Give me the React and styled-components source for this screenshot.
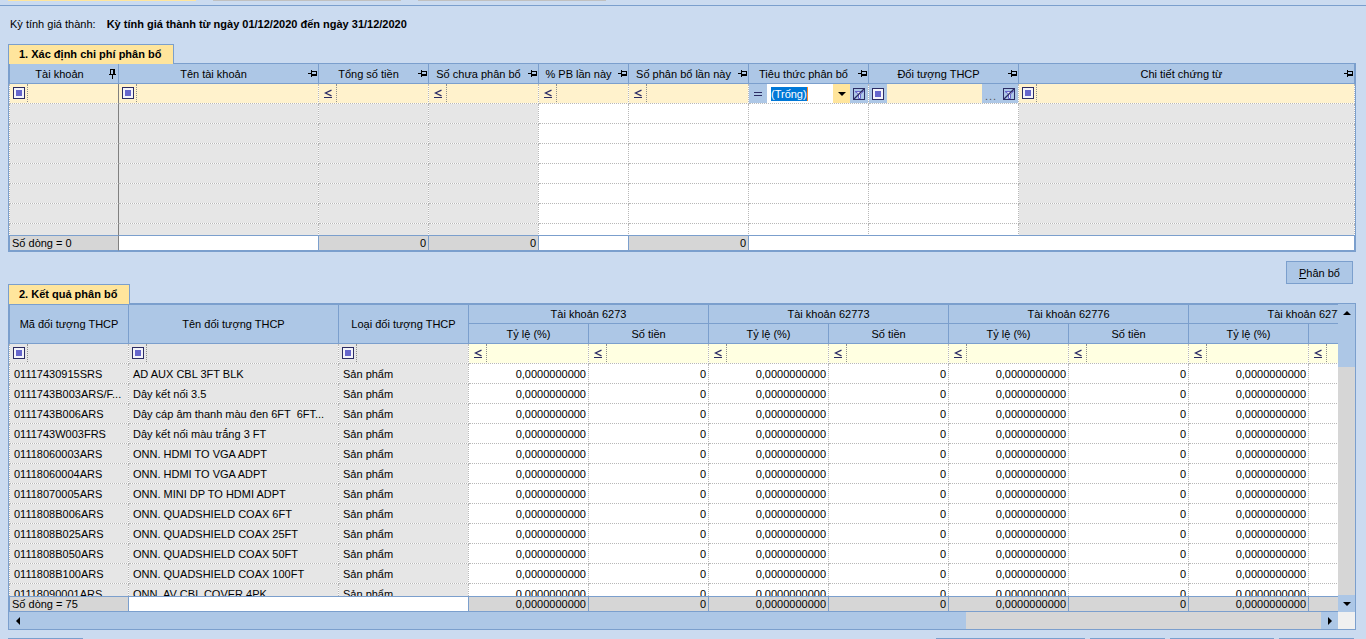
import styled, { createGlobalStyle, ThemeProvider, css } from "styled-components";

const theme = {
  colors: {
    page: "#cbdbf0",
    header: "#adc7e6",
    line: "#7b9fcd",
    tab: "#ffe59c",
    filter: "#fff2cc",
    filterAlt: "#ffffe1",
    locked: "#e6e6e6",
    summary: "#d6d6d6",
    dots: "#b8b8b8",
    icon: "#2c2c64",
    iconFill: "#6666cc",
    select: "#0078d7",
  },
  font: '"Liberation Sans", Arial, sans-serif',
};

const GlobalStyle = createGlobalStyle`
  *, *::before, *::after {
    box-sizing: border-box;
  }

  body {
    margin: 0;
    background: ${(p) => p.theme.colors.page};
    color: #000;
    font-family: ${(p) => p.theme.font};
    font-size: 11px;
    line-height: 14px;
  }

  button, input, select {
    font: inherit;
    color: inherit;
    border: 0;
    border-radius: 0;
    margin: 0;
    padding: 0;
    background: transparent;
  }
`;

const Window = styled.div`
  height: 100vh;
  display: flex;
  flex-direction: column;
  overflow: hidden;
`;

const StepStrip = styled.div`
  display: flex;
  gap: 17px;
  height: 6px;
  padding-left: 8px;
  border-bottom: 1px solid ${(p) => p.theme.colors.line};
`;

const Step = styled.span`
  width: 188px;
  height: 1px;
  background: ${(p) => (p.$active ? p.theme.colors.tab : "#c0c0c0")};
`;

const Content = styled.main`
  flex: 1;
  min-height: 0;
  display: flex;
  flex-direction: column;
  padding: 0 10px 8px 8px;
`;

const Period = styled.p`
  display: flex;
  gap: 11px;
  margin: 0;
  padding: 11px 2px 13px;
`;

const TabTitle = styled.h2`
  align-self: flex-start;
  position: relative;
  z-index: 1;
  height: 20px;
  margin: 0 0 -1px;
  padding: 2px 12px 0 10px;
  font-size: 11px;
  background: ${(p) => p.theme.colors.tab};
  border: 1px solid ${(p) => p.theme.colors.line};
  border-bottom: 0;
`;

const CostGrid = styled.div`
  height: 189px;
  flex: none;
  overflow: hidden;
  border: 1px solid ${(p) => p.theme.colors.line};
`;

const ResultGrid = styled.div`
  flex: 1;
  min-height: 0;
  display: grid;
  grid-template-columns: minmax(0, 1fr) 17px;
  grid-template-rows: minmax(0, 1fr) 17px;
  border: 1px solid ${(p) => p.theme.colors.line};
`;

const ResultView = styled.div`
  overflow: hidden;
`;

const Table = styled.table`
  width: ${(p) => p.$width || "100%"};
  table-layout: fixed;
  border-collapse: separate;
  border-spacing: 0;
  background: #fff;

  thead th:first-child,
  tfoot td:first-child {
    border-left: 1px solid ${(p) => p.theme.colors.line};
  }

  thead tr + tr th:first-child {
    border-left: 0;
  }

  tbody td:first-child {
    border-left: 1px dotted ${(p) => p.theme.colors.dots};
  }
`;

const Head = styled.th`
  height: 20px;
  padding: 0;
  font-weight: normal;
  text-align: center;
  white-space: nowrap;
  overflow: hidden;
  background: ${(p) => p.theme.colors.header};
  border-right: 1px solid ${(p) => p.theme.colors.line};
  border-bottom: 1px solid ${(p) => p.theme.colors.line};
  ${(p) => p.$topLine && css`border-top: 1px solid ${p.theme.colors.line};`}
`;

const HeadInner = styled.div`
  display: flex;
  align-items: center;

  span {
    flex: 1;
  }

  svg {
    flex: none;
  }
`;

const Cell = styled.td`
  height: 20px;
  padding: 0 2px 0 4px;
  white-space: pre;
  overflow: hidden;
  text-align: ${(p) => (p.$number ? "right" : "left")};
  background: ${(p) => (p.$locked ? p.theme.colors.locked : "#fff")};
  background-clip: padding-box;
  border-right: 1px dotted ${(p) => p.theme.colors.dots};
  border-bottom: 1px dotted ${(p) => p.theme.colors.dots};
  ${(p) => p.$frozenEdge && css`border-right: 1px solid #808080;`}
`;

const FilterTd = styled(Cell)`
  padding: 0;
  background: ${(p) => p.theme.colors[p.$tone]};
  background-clip: padding-box;
`;

const FilterBox = styled.div`
  display: flex;
  height: 19px;

  input {
    flex: 1;
    min-width: 0;
    width: 0;
    outline: 0;
  }
`;

const FilterButton = styled.button`
  flex: none;
  width: 18px;
  height: ${(p) => (p.$solid ? 19 : 18)}px;
  display: flex;
  align-items: center;
  justify-content: center;
  background: ${(p) => (p.$solid ? p.theme.colors.header : "transparent")};
  ${(p) => !p.$solid && css`border-right: 1px dotted #909090;`}
`;

const MoreButton = styled(FilterButton)`
  align-items: flex-end;
  color: #555;
  letter-spacing: 1px;
`;

const DropButton = styled(FilterButton)`
  width: 17px;
  background: ${(p) => p.theme.colors.tab};
`;

const ComboField = styled.div`
  flex: 1;
  display: flex;
  align-items: center;
  padding-left: 4px;
  background: #fff;
`;

const Combo = styled.select`
  appearance: none;
  height: 14px;
  color: #fff;
  background: ${(p) => p.theme.colors.select};
  border-right: 1px solid #ff8728;
  outline: 0;
`;

const SumCell = styled.td`
  position: sticky;
  bottom: 0;
  height: 16px;
  padding: 0 2px;
  line-height: 14px;
  white-space: nowrap;
  text-align: ${(p) => (p.$number ? "right" : "left")};
  background: ${(p) => (p.$blank ? "#fff" : p.theme.colors.summary)};
  border: 0 solid ${(p) => p.theme.colors.line};
  border-width: 1px 1px 1px 0;
  ${(p) => p.$frozenEdge && css`border-right-color: #808080;`}
`;

const Actions = styled.div`
  display: flex;
  justify-content: flex-end;
  padding: 9px 3px 0;
`;

const ActionButton = styled.button`
  height: 23px;
  padding: 0 12px;
  background: ${(p) => p.theme.colors.header};
  border: 1px solid ${(p) => p.theme.colors.line};
`;

const ScrollColumn = styled.div`
  display: flex;
  flex-direction: column;
  background: ${(p) => p.theme.colors.summary};
`;

const ScrollRow = styled.div`
  display: flex;
  background: ${(p) => p.theme.colors.summary};
`;

const ScrollButton = styled.button`
  flex: none;
  width: 17px;
  height: 17px;
  display: flex;
  align-items: center;
  justify-content: center;
  background: ${(p) => p.theme.colors.header};
`;

const Thumb = styled.div`
  flex: ${(p) => p.$share};
  background: ${(p) => p.theme.colors.header};
`;

const Rest = styled.div`
  flex: ${(p) => p.$share};
`;

const Corner = styled.div`
  background: #f0f0f0;
`;

const CommandBar = styled.footer`
  flex: none;
  display: flex;
  gap: 5px;
  height: 1px;
  padding: 0 12px 0 8px;
  overflow: hidden;
`;

const Command = styled.div`
  width: ${(p) => p.$width}px;
  height: 23px;
  background: ${(p) => p.theme.colors.header};
  border: 1px solid ${(p) => p.theme.colors.line};

  &:first-child {
    margin-right: auto;
  }
`;

function PinIcon({ down }) {
  if (down) {
    return (
      <svg width="9" height="10" viewBox="0 0 9 10" shapeRendering="crispEdges" aria-hidden="true">
        <path d="M1 0h5v1H1zM1 1h1v5H1zM4 1h2v5H4zM0 5h7v1H0zM3 6h1v4H3z" fill="#000" />
      </svg>
    );
  }
  return (
    <svg width="10" height="9" viewBox="0 0 10 9" shapeRendering="crispEdges" aria-hidden="true">
      <path d="M0 4h3v1H0zM3 1h1v7H3zM4 2h5v1H4zM8 3h1v2H8zM4 5h5v2H4z" fill="#000" />
    </svg>
  );
}

function ContainsIcon() {
  return (
    <svg width="12" height="12" viewBox="0 0 12 12" shapeRendering="crispEdges" aria-hidden="true">
      <rect x="0" y="0" width="12" height="12" fill="#2c2c64" />
      <rect x="1" y="1" width="10" height="10" fill="#f4f4fa" />
      <rect x="3" y="3" width="6" height="6" fill="#6666cc" />
    </svg>
  );
}

function LessEqualIcon() {
  return (
    <svg width="8" height="14" viewBox="0 0 8 14" aria-hidden="true">
      <path d="M7.5 4.2 1.4 7 7.5 9.8" fill="none" stroke="#2c2c64" strokeWidth="1.3" />
      <path d="M0 11h8v1H0z" fill="#2c2c64" shapeRendering="crispEdges" />
    </svg>
  );
}

function EqualIcon() {
  return (
    <svg width="8" height="5" viewBox="0 0 8 5" shapeRendering="crispEdges" aria-hidden="true">
      <path d="M0 1h8v1H0zM0 4h8v1H0z" fill="#2c2c64" />
    </svg>
  );
}

function ClearFilterIcon() {
  return (
    <svg width="12" height="12" viewBox="0 0 12 12" aria-hidden="true">
      <rect x=".5" y=".5" width="11" height="11" fill="#adc7e6" stroke="#2c2c64" />
      <path d="M2 3.5h8.5L7.5 6v4.5h-2V6z" fill="#e8eafc" stroke="#6666cc" strokeWidth="1" />
      <path d="M1 11 11 1" stroke="#2c2c64" strokeWidth="1.3" />
    </svg>
  );
}

function Arrow({ points }) {
  return (
    <svg width="8" height="8" viewBox="0 0 8 8" aria-hidden="true">
      <polygon points={points} fill="#000" />
    </svg>
  );
}

const ARROWS = {
  up: "0,6 4,2 8,6",
  down: "0,2 8,2 4,6",
  left: "6,0 6,8 2,4",
  right: "2,0 2,8 6,4",
};

const COST_COLUMNS = [
  { label: "Tài khoản", width: 110, op: "contains", locked: true, frozenEdge: true, sum: "Số dòng = 0" },
  { label: "Tên tài khoản", width: 200, op: "contains", locked: true },
  { label: "Tổng số tiền", width: 110, op: "lte", locked: true, sum: "0", number: true },
  { label: "Số chưa phân bổ", width: 110, op: "lte", locked: true, sum: "0", number: true },
  { label: "% PB lần này", width: 90, op: "lte" },
  { label: "Số phân bổ lần này", width: 120, op: "lte", sum: "0", number: true },
  { label: "Tiêu thức phân bổ", width: 120, op: "combo" },
  { label: "Đối tượng THCP", width: 150, op: "lookup" },
  { label: "Chi tiết chứng từ", op: "contains", locked: true },
];

const RESULT_COLUMNS = [
  { label: "Mã đối tượng THCP", width: 120 },
  { label: "Tên đối tượng THCP", width: 210 },
  { label: "Loại đối tượng THCP", width: 130 },
];

const ACCOUNTS = ["6273", "62773", "62776", "62777"];

const RESULT_ROWS = [
  ["01117430915SRS", "AD AUX CBL 3FT BLK"],
  ["0111743B003ARS/F...", "Dây kết nối 3.5"],
  ["0111743B006ARS", "Dây cáp âm thanh màu đen 6FT  6FT..."],
  ["0111743W003FRS", "Dây kết nối màu trắng 3 FT"],
  ["01118060003ARS", "ONN. HDMI TO VGA ADPT"],
  ["01118060004ARS", "ONN. HDMI TO VGA ADPT"],
  ["01118070005ARS", "ONN. MINI DP TO HDMI ADPT"],
  ["0111808B006ARS", "ONN. QUADSHIELD COAX 6FT"],
  ["0111808B025ARS", "ONN. QUADSHIELD COAX 25FT"],
  ["0111808B050ARS", "ONN. QUADSHIELD COAX 50FT"],
  ["0111808B100ARS", "ONN. QUADSHIELD COAX 100FT"],
  ["01118090001ARS", "ONN. AV CBL COVER 4PK"],
];

const EMPTY_ROWS = [1, 2, 3, 4, 5, 6, 7];

function FilterCell({ op, label, tone, frozenEdge }) {
  return (
    <FilterTd $tone={tone} $frozenEdge={frozenEdge}>
      <FilterBox>
        {op === "combo" ? (
          <>
            <FilterButton $solid aria-label={`${label} =`}>
              <EqualIcon />
            </FilterButton>
            <ComboField>
              <Combo aria-label={label}>
                <option>(Trống)</option>
              </Combo>
            </ComboField>
            <DropButton $solid aria-label="Mở danh sách">
              <Arrow points={ARROWS.down} />
            </DropButton>
            <FilterButton $solid aria-label="Xóa lọc">
              <ClearFilterIcon />
            </FilterButton>
          </>
        ) : (
          <>
            <FilterButton $solid={op === "lookup"} aria-label={`Lọc ${label}`}>
              {op === "lte" ? <LessEqualIcon /> : <ContainsIcon />}
            </FilterButton>
            <input aria-label={label} />
            {op === "lookup" && (
              <>
                <MoreButton $solid>...</MoreButton>
                <FilterButton $solid aria-label="Xóa lọc">
                  <ClearFilterIcon />
                </FilterButton>
              </>
            )}
          </>
        )}
      </FilterBox>
    </FilterTd>
  );
}

function CostTable() {
  return (
    <Table>
      <colgroup>
        {COST_COLUMNS.map((col) => (
          <col key={col.label} width={col.width} />
        ))}
      </colgroup>
      <thead>
        <tr>
          {COST_COLUMNS.map((col, i) => (
            <Head key={col.label}>
              <HeadInner>
                <span>{col.label}</span>
                <PinIcon down={i === 0} />
              </HeadInner>
            </Head>
          ))}
        </tr>
      </thead>
      <tbody>
        <tr>
          {COST_COLUMNS.map((col) => (
            <FilterCell
              key={col.label}
              op={col.op}
              label={col.label}
              tone="filter"
              frozenEdge={col.frozenEdge}
            />
          ))}
        </tr>
        {EMPTY_ROWS.map((row) => (
          <tr key={row}>
            {COST_COLUMNS.map((col) => (
              <Cell key={col.label} $locked={col.locked} $frozenEdge={col.frozenEdge} />
            ))}
          </tr>
        ))}
      </tbody>
      <tfoot>
        <tr>
          {COST_COLUMNS.slice(0, 6).map((col) => (
            <SumCell key={col.label} $number={col.number} $blank={!col.sum} $frozenEdge={col.frozenEdge}>
              {col.sum}
            </SumCell>
          ))}
          <SumCell colSpan={3} $blank />
        </tr>
      </tfoot>
    </Table>
  );
}

function ResultTable() {
  return (
    <Table $width="1420px">
      <colgroup>
        {RESULT_COLUMNS.map((col) => (
          <col key={col.label} width={col.width} />
        ))}
        <col span={ACCOUNTS.length * 2} width={120} />
      </colgroup>
      <thead>
        <tr>
          {RESULT_COLUMNS.map((col) => (
            <Head key={col.label} rowSpan={2} $topLine>
              {col.label}
            </Head>
          ))}
          {ACCOUNTS.map((account) => (
            <Head key={account} colSpan={2} $topLine>
              Tài khoản {account}
            </Head>
          ))}
        </tr>
        <tr>
          {ACCOUNTS.map((account) => [
            <Head key={`${account}-rate`}>Tỷ lệ (%)</Head>,
            <Head key={`${account}-sum`}>Số tiền</Head>,
          ])}
        </tr>
      </thead>
      <tbody>
        <tr>
          {RESULT_COLUMNS.map((col) => (
            <FilterCell key={col.label} op="contains" label={col.label} tone="locked" />
          ))}
          {ACCOUNTS.map((account) => [
            <FilterCell key={`${account}-rate`} op="lte" label={`Tỷ lệ ${account}`} tone="filterAlt" />,
            <FilterCell key={`${account}-sum`} op="lte" label={`Số tiền ${account}`} tone="filterAlt" />,
          ])}
        </tr>
        {RESULT_ROWS.map(([code, name]) => (
          <tr key={code}>
            <Cell $locked>{code}</Cell>
            <Cell $locked>{name}</Cell>
            <Cell $locked>Sản phẩm</Cell>
            {ACCOUNTS.map((account) => [
              <Cell key={`${account}-rate`} $number>0,0000000000</Cell>,
              <Cell key={`${account}-sum`} $number>0</Cell>,
            ])}
          </tr>
        ))}
      </tbody>
      <tfoot>
        <tr>
          <SumCell>Số dòng = 75</SumCell>
          <SumCell colSpan={2} $blank />
          {ACCOUNTS.map((account) => [
            <SumCell key={`${account}-rate`} $number>0,0000000000</SumCell>,
            <SumCell key={`${account}-sum`} $number>0</SumCell>,
          ])}
        </tr>
      </tfoot>
    </Table>
  );
}

function App() {
  return (
    <ThemeProvider theme={theme}>
      <GlobalStyle />
      <Window>
        <StepStrip>
          <Step $active />
          <Step />
          <Step />
        </StepStrip>

        <Content>
          <Period>
            <span>Kỳ tính giá thành:</span>
            <strong>Kỳ tính giá thành từ ngày 01/12/2020 đến ngày 31/12/2020</strong>
          </Period>

          <TabTitle>1. Xác định chi phí phân bổ</TabTitle>
          <CostGrid>
            <CostTable />
          </CostGrid>

          <Actions>
            <ActionButton>
              <u>P</u>hân bổ
            </ActionButton>
          </Actions>

          <TabTitle>2. Kết quả phân bổ</TabTitle>
          <ResultGrid>
            <ResultView>
              <ResultTable />
            </ResultView>
            <ScrollColumn>
              <ScrollButton aria-label="Cuộn lên">
                <Arrow points={ARROWS.up} />
              </ScrollButton>
              <Thumb $share={46} />
              <Rest $share={228} />
              <ScrollButton aria-label="Cuộn xuống">
                <Arrow points={ARROWS.down} />
              </ScrollButton>
            </ScrollColumn>
            <ScrollRow>
              <ScrollButton aria-label="Cuộn trái">
                <Arrow points={ARROWS.left} />
              </ScrollButton>
              <Thumb $share={940} />
              <Rest $share={355} />
              <ScrollButton aria-label="Cuộn phải">
                <Arrow points={ARROWS.right} />
              </ScrollButton>
            </ScrollRow>
            <Corner />
          </ResultGrid>
        </Content>

        <CommandBar>
          <Command $width={75} />
          <Command $width={149} />
          <Command $width={75} />
          <Command $width={104} />
          <Command $width={75} />
        </CommandBar>
      </Window>
    </ThemeProvider>
  );
}

export default App;
